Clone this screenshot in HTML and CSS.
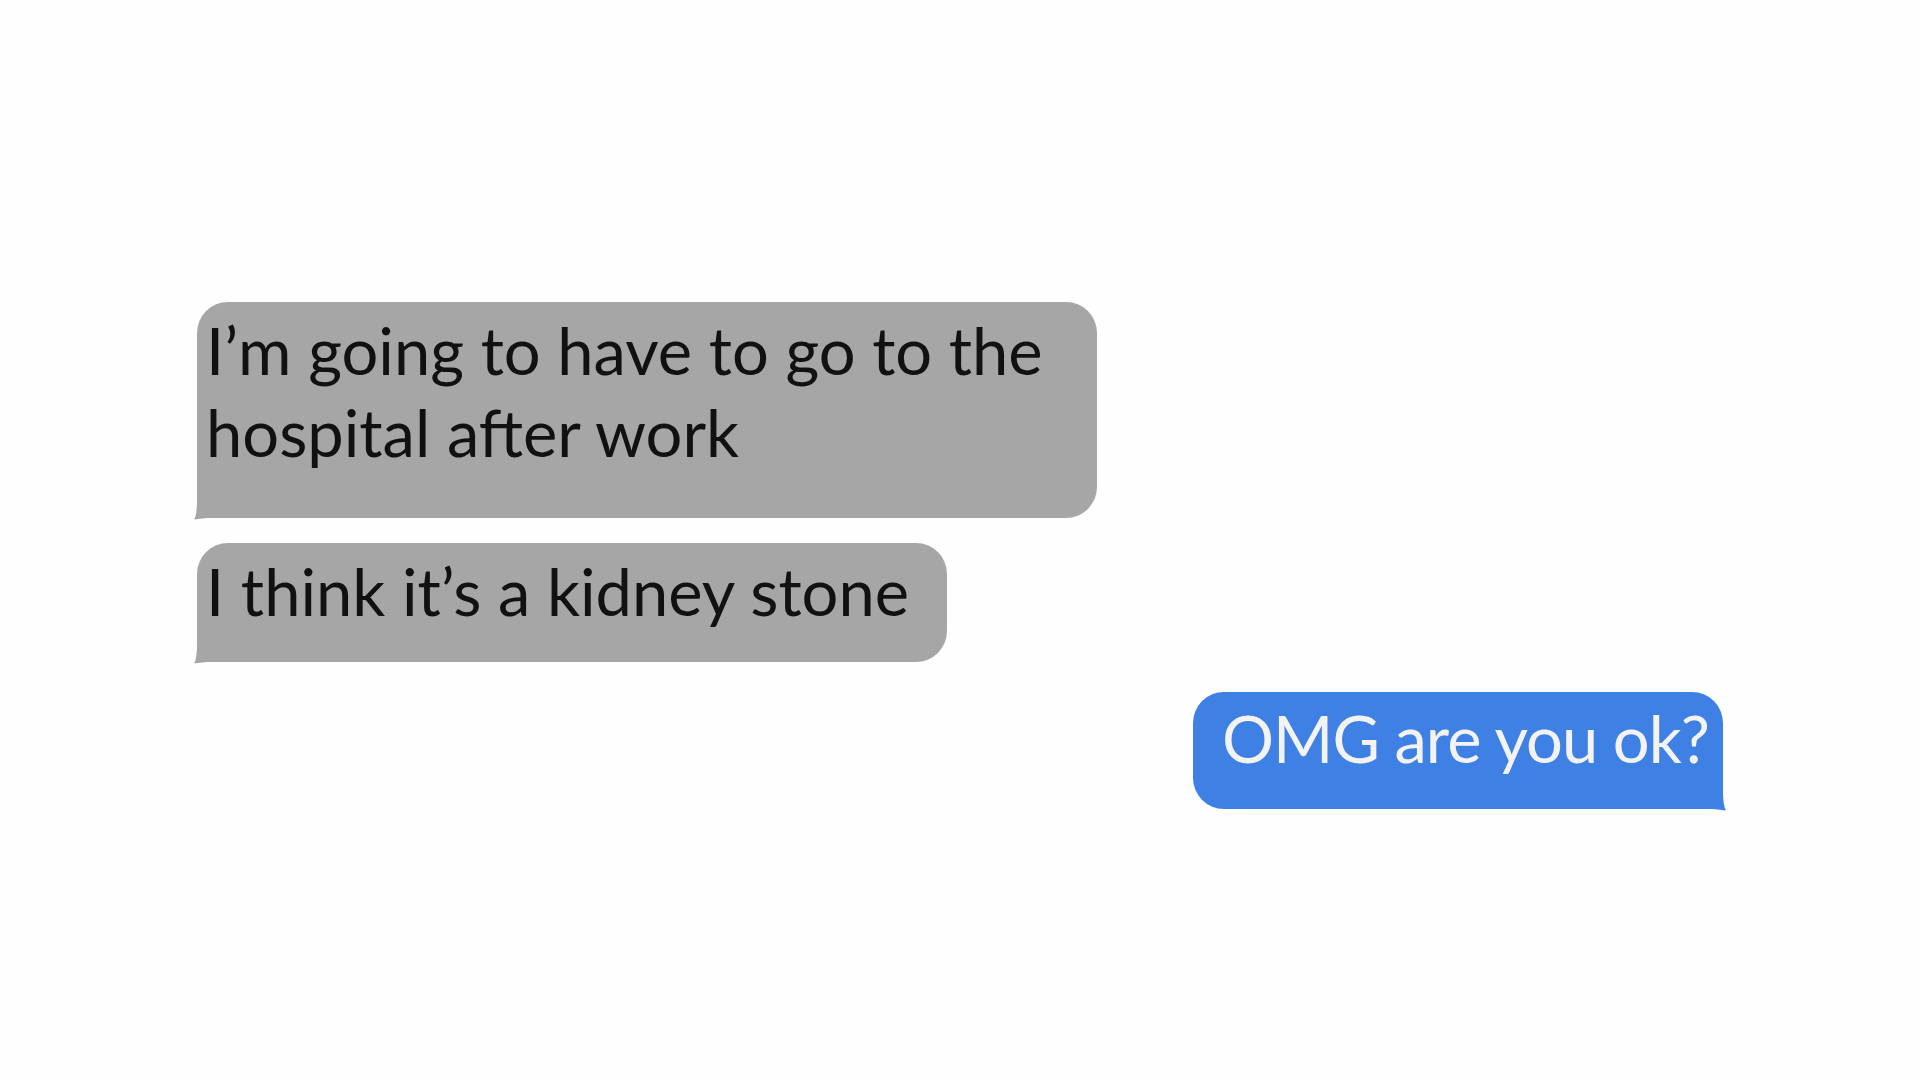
FILE: index.html
```html
<!DOCTYPE html>
<html lang="en">
<head>
<meta charset="utf-8">
<title>Messages</title>
<link rel="stylesheet" href="styles.css">
</head>
<body>
<main class="thread">
  <div class="bubble received tall">
    <p class="text">I’m going to have to go to the hospital after work</p>
    <svg class="tail tail-left" width="26" height="24" viewBox="0 0 26 24"><path d="M4 4 Q4 19 1 23.5 Q7 22.6 14 22 L14 4 Z"/></svg>
  </div>
  <div class="bubble received short">
    <p class="text">I think it’s a kidney stone</p>
    <svg class="tail tail-left" width="26" height="24" viewBox="0 0 26 24"><path d="M4 4 Q4 19 1 23.5 Q7 22.6 14 22 L14 4 Z"/></svg>
  </div>
  <div class="bubble sent">
    <p class="text nowrap">OMG are you ok?</p>
    <svg class="tail tail-right" width="26" height="24" viewBox="0 0 26 24"><path d="M22 4 Q22 19 25 23.5 Q19 22.6 12 22 L12 4 Z"/></svg>
  </div>
</main>
</body>
</html>
```
FILE: styles.css
```css
html, body {
  margin: 0;
  padding: 0;
  background: #fefefe;
}

.thread {
  width: 1920px;
  height: 1080px;
  box-sizing: border-box;
  padding: 302px 197px 0 197px;
  display: flex;
  flex-direction: column;
  align-items: flex-start;
  font-family: "Lato", "Open Sans", sans-serif;
}

.bubble {
  position: relative;
  box-sizing: border-box;
  border-radius: 31px;
  padding: 7px 13px 29px 9px;
}

.text {
  margin: 0;
  font-size: 65px;
  line-height: 82px;
  font-weight: 400;
}

.nowrap {
  white-space: nowrap;
}

.received {
  background: #a6a6a6;
  color: #111111;
  border-bottom-left-radius: 4px;
}

.received .tail path {
  fill: #a6a6a6;
}

.tall {
  width: 900px;
  height: 216px;
  padding-bottom: 45px;
}

.short {
  width: 750px;
  height: 119px;
  margin-top: 25px;
}

.sent {
  align-self: flex-end;
  width: 530px;
  height: 117px;
  margin-top: 30px;
  padding: 5px 16px 30px 29px;
  background: #3e80e3;
  color: #f3f3f3;
  border-bottom-right-radius: 4px;
}

.sent .text {
  letter-spacing: -1px;
}

.sent .tail path {
  fill: #3e80e3;
}

.tail {
  position: absolute;
  bottom: -2px;
  display: block;
}

.tail-left {
  left: -4px;
}

.tail-right {
  right: -4px;
}
```
